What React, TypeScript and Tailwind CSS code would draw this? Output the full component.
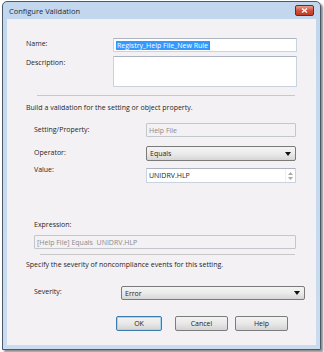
const font = { fontFamily: '"Open Sans", "Noto Sans", sans-serif' };

function TextBox({ children, className = '', disabled = false }: { children?: React.ReactNode; className?: string; disabled?: boolean }) {
  return (
    <div
      className={`flex items-center px-[2px] border rounded-[1px] ${
        disabled
          ? 'border-[#c3c6ca] bg-[#f4f1f4] text-[#8a8a8a]'
          : 'border-[#c9d3de] border-t-[#aab3bf] bg-white text-[#1e1e1e]'
      } ${className}`}
    >
      {children}
    </div>
  );
}

function Combo({ value, className = '' }: { value: string; className?: string }) {
  return (
    <div
      className={`flex items-center justify-between pl-[3px] pr-[4px] border border-[#7a7a7a] rounded-[2px] bg-gradient-to-b from-[#f4f4f4] via-[#ebebeb] to-[#d6d6d6] text-[#1e1e1e] ${className}`}
    >
      <span>{value}</span>
      <svg width="6" height="4" viewBox="0 0 6 4">
        <path d="M0 0h6L3 4z" fill="#111" />
      </svg>
    </div>
  );
}

function Button({ label, focused = false, className = '' }: { label: string; focused?: boolean; className?: string }) {
  return (
    <div
      className={`flex items-center justify-center h-[15px] border rounded-[2px] bg-gradient-to-b from-[#f3f3f3] via-[#e8e8e8] to-[#d3d3d3] text-[#1e1e1e] ${
        focused ? 'border-[#3d7bad] shadow-[inset_0_0_0_1px_#a6d4f2]' : 'border-[#7c7c7c]'
      } ${className}`}
    >
      {label}
    </div>
  );
}

export default function App() {
  return (
    <div className="w-[324px] h-[352px] bg-white pt-[1px] pl-[2px] text-[7px] leading-[9px]" style={font}>
      <div className="w-[319px] h-[349px] flex flex-col border border-[#4b5868] rounded-t-[5px] bg-gradient-to-b from-[#c2d7ee] to-[#c9dcf0] shadow-[2px_2px_2px_rgba(0,0,0,0.45)]">
        {/* title bar */}
        <div className="h-[17px] flex items-start justify-between pl-[6px] pr-[6px]">
          <span className="mt-[5px] text-[7.5px] leading-[9px] text-[#1e2a36]">Configure Validation</span>
          <div className="mt-[3px] w-[19px] h-[11px] flex items-center justify-center rounded-[2px] border border-[#6b2a22] bg-gradient-to-b from-[#e8a08e] via-[#d0513b] to-[#c23a24]">
            <svg width="7" height="5" viewBox="0 0 7 5">
              <path d="M1 0.5l5 4M6 0.5l-5 4" stroke="#fff" strokeWidth="1.4" />
            </svg>
          </div>
        </div>

        {/* client area */}
        <div className="mx-[4px] h-[326px] bg-[#f4f1f4] text-[#1e1e1e] flex flex-col">
          {/* name */}
          <div className="flex items-start mt-[19px]">
            <span className="ml-[19px] w-[87px] mt-[1px]">Name:</span>
            <TextBox className="w-[184px] h-[14px]">
              <span className="bg-[#3399ff] text-white leading-[9px] px-[1px]">Registry_Help File_New Rule</span>
              <span className="w-[1px] h-[9px] bg-[#e06010]" />
            </TextBox>
          </div>
          {/* description */}
          <div className="flex items-start mt-[4px]">
            <span className="ml-[19px] w-[87px] mt-[2px]">Description:</span>
            <TextBox className="w-[184px] h-[31px]" />
          </div>
          <div className="ml-[30px] w-[258px] h-[1px] bg-[#c8c8c8] mt-[8px]" />

          <div className="ml-[19px] mt-[7px]">Build a validation for the setting or object property.</div>

          {/* setting/property */}
          <div className="flex items-start mt-[11px]">
            <span className="ml-[27px] w-[112px] mt-[2px]">Setting/Property:</span>
            <TextBox disabled className="w-[150px] h-[14px]">Help File</TextBox>
          </div>
          {/* operator */}
          <div className="flex items-start mt-[9px]">
            <span className="ml-[27px] w-[112px] mt-[2px]">Operator:</span>
            <Combo value="Equals" className="w-[150px] h-[15px]" />
          </div>
          {/* value */}
          <div className="flex items-start mt-[7px]">
            <span className="ml-[27px] w-[112px] mt-[-3px]">Value:</span>
            <TextBox className="w-[150px] h-[15px] justify-between !pr-0">
              <span>UNIDRV.HLP</span>
              <div className="w-[10px] h-full flex flex-col items-center justify-center gap-[2px] border-l border-[#eeeeee]">
                <svg width="5" height="3" viewBox="0 0 5 3">
                  <path d="M0 3L2.5 0 5 3z" fill="#a9a9a9" />
                </svg>
                <svg width="5" height="3" viewBox="0 0 5 3">
                  <path d="M0 0h5L2.5 3z" fill="#a9a9a9" />
                </svg>
              </div>
            </TextBox>
          </div>

          {/* expression */}
          <div className="ml-[27px] mt-[37px]">Expression:</div>
          <TextBox disabled className="ml-[27px] mt-[6px] w-[262px] h-[14px]">
            [Help File] Equals&nbsp;&nbsp;UNIDRV.HLP
          </TextBox>
          <div className="ml-[33px] w-[255px] h-[1px] bg-[#c8c8c8] mt-[5px]" />

          <div className="ml-[19px] mt-[5px]">Specify the severity of noncompliance events for this setting.</div>

          {/* severity */}
          <div className="flex items-start mt-[17px]">
            <span className="ml-[27px] w-[87px] mt-[1px]">Severity:</span>
            <Combo value="Error" className="w-[184px] h-[14px]" />
          </div>

          {/* buttons */}
          <div className="flex items-start mt-[16px] ml-[109px]">
            <Button label="OK" focused className="w-[46px]" />
            <Button label="Cancel" className="w-[53px] ml-[13px]" />
            <Button label="Help" className="w-[53px] ml-[7px]" />
          </div>
        </div>
      </div>
    </div>
  );
}
